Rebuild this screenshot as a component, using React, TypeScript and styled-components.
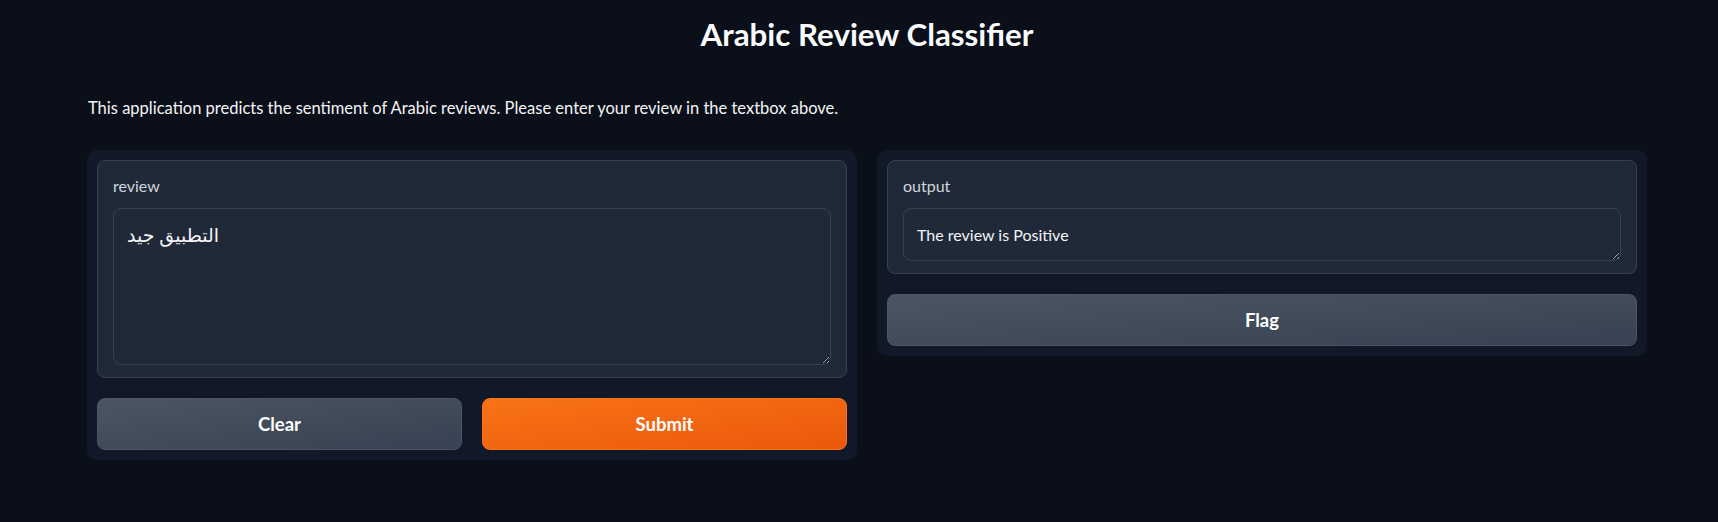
import React from "react";
import styled, { createGlobalStyle } from "styled-components";

const GlobalStyle = createGlobalStyle`
  html, body {
    margin: 0;
    padding: 0;
    background: #0b0f19;
  }
  body {
    font-family: "Lato", "DejaVu Sans", sans-serif;
    color: #f3f4f6;
  }
  * { box-sizing: border-box; }
`;

const Page = styled.div`
  width: 1560px;
  margin-left: 87px;
  padding-top: 14px;
  padding-bottom: 62px;
`;

const Title = styled.h1`
  margin: 0;
  text-align: center;
  font-size: 31.3px;
  line-height: 40px;
  font-weight: 700;
  color: #f9fafb;
`;

const Description = styled.p`
  margin: 42px 0 0 1px;
  font-size: 16.5px;
  line-height: 24px;
  color: #f3f4f6;
`;

const Row = styled.div`
  margin-top: 30px;
  display: flex;
  gap: 20px;
  align-items: flex-start;
`;

const Panel = styled.div`
  flex: 1 1 0;
  background: #111827;
  border-radius: 10px;
  padding: 10px;
  display: flex;
  flex-direction: column;
  gap: 20px;
`;

const Block = styled.div`
  background: #1f2937;
  border: 1px solid #374151;
  border-radius: 8px;
  padding: 15px 15px 12px;
  display: flex;
  flex-direction: column;
  gap: 12px;
`;

const Label = styled.span`
  font-size: 16px;
  line-height: 20px;
  color: #d1d5db;
`;

const TextArea = styled.textarea<{ $h: number; $size: number }>`
  display: block;
  width: 100%;
  height: ${(p) => p.$h}px;
  margin: 0;
  padding: 13px 13px;
  background: #1f2937;
  border: 1px solid #374151;
  border-radius: 8px;
  color: #f3f4f6;
  font-family: "Lato", "DejaVu Sans", sans-serif;
  font-size: ${(p) => p.$size}px;
  line-height: 25px;
  resize: vertical;
  outline: none;
  color-scheme: dark;
`;

const ButtonRow = styled.div`
  display: grid;
  grid-template-columns: 1fr 1fr;
  gap: 20px;
`;

const Button = styled.button<{ $variant: "primary" | "secondary" }>`
  display: block;
  width: 100%;
  height: 52px;
  border-radius: 8px;
  font-family: "Lato", sans-serif;
  font-size: 18.5px;
  font-weight: 700;
  color: #ffffff;
  cursor: pointer;
  border: 1px solid
    ${(p) => (p.$variant === "primary" ? "#f97316" : "#4b5563")};
  background: ${(p) =>
    p.$variant === "primary"
      ? "linear-gradient(to bottom right, #f97316, #ea580c)"
      : "linear-gradient(to bottom right, #4b5563, #374151)"};
`;

export default function App() {
  return (
    <>
      <GlobalStyle />
      <Page>
        <Title>Arabic Review Classifier</Title>
        <Description>
          This application predicts the sentiment of Arabic reviews. Please
          enter your review in the textbox above.
        </Description>
        <Row>
          <Panel>
            <Block>
              <Label>review</Label>
              <TextArea $h={157} $size={19} defaultValue="التطبيق جيد" />
            </Block>
            <ButtonRow>
              <Button $variant="secondary">Clear</Button>
              <Button $variant="primary">Submit</Button>
            </ButtonRow>
          </Panel>
          <Panel>
            <Block>
              <Label>output</Label>
              <TextArea
                $h={53}
                $size={16}
                readOnly
                defaultValue="The review is Positive"
              />
            </Block>
            <Button $variant="secondary">Flag</Button>
          </Panel>
        </Row>
      </Page>
    </>
  );
}
